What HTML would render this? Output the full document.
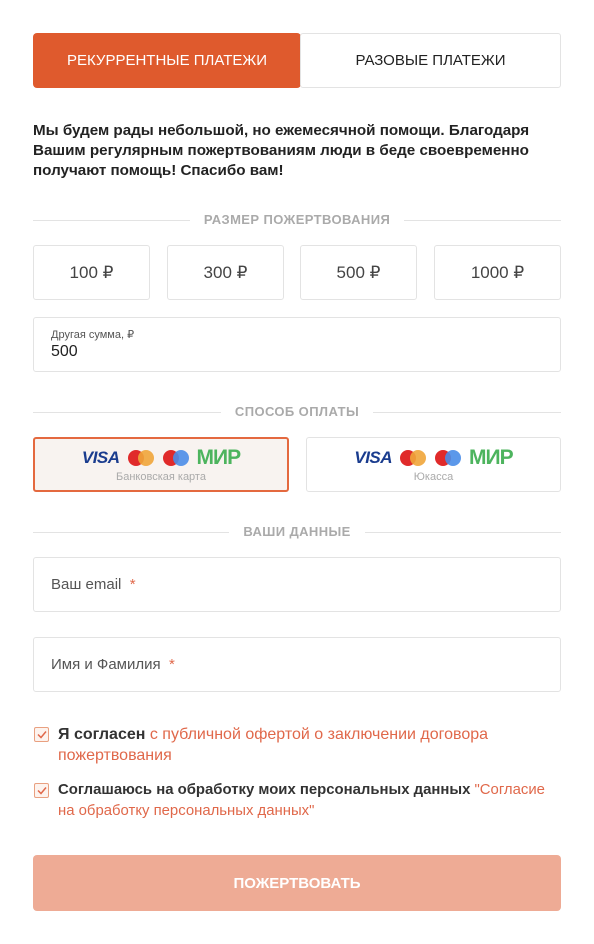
<!DOCTYPE html><html><head><meta charset="utf-8"><style>
*{box-sizing:border-box;margin:0;padding:0}
body{width:594px;height:944px;background:#fff;font-family:"Liberation Sans",sans-serif;color:#333;position:relative}
.a{position:absolute}
.box{position:absolute;border:1px solid #e3e3e3;border-radius:3px;background:#fff}
.div{position:absolute;left:33px;width:528px;height:1px;background:#e3e3e3}
.dl{position:absolute;left:0;width:594px;text-align:center;font-size:13px;font-weight:bold;color:#aaa;letter-spacing:.4px}
.dl span{background:#fff;padding:0 14px}
.amt{top:245px;height:55px;width:117px;font-size:17px;color:#444;display:flex;align-items:center;justify-content:center}
.inp{left:33px;width:528px;height:55px;font-size:15px;color:#555;padding-left:17px;display:flex;align-items:center}
.cb{position:absolute;left:34px;width:15px;height:15px;border:1px solid #e9a080;border-radius:2px;background:#fdf3ee}
.o{color:#e0684a}
.logos{display:flex;align-items:center;justify-content:center;gap:7px;margin-top:8px;height:22px}
.visa{font-style:italic;font-weight:bold;font-size:17px;color:#1a3c8e;letter-spacing:-.5px}
.mir{font-weight:bold;font-size:21px;color:#4db45e;letter-spacing:-1px}
</style></head><body>
<div class="a" style="left:33px;top:33px;width:268px;height:55px;background:#df5a2d;border-radius:4px;color:#fff;font-size:15px;display:flex;align-items:center;justify-content:center">РЕКУРРЕНТНЫЕ ПЛАТЕЖИ</div>
<div class="box" style="left:300px;top:33px;width:261px;height:55px;font-size:15px;color:#222;display:flex;align-items:center;justify-content:center">РАЗОВЫЕ ПЛАТЕЖИ</div>
<div class="a" style="left:33px;top:121px;width:540px;font-size:15.2px;font-weight:bold;line-height:20px;color:#222">Мы будем рады небольшой, но ежемесячной помощи. Благодаря Вашим регулярным пожертвованиям люди в беде своевременно получают помощь! Спасибо вам!</div>
<div class="div" style="top:220px"></div><div class="dl" style="top:212px"><span>РАЗМЕР ПОЖЕРТВОВАНИЯ</span></div>
<div class="box amt" style="left:33px">100 ₽</div>
<div class="box amt" style="left:167px">300 ₽</div>
<div class="box amt" style="left:300px">500 ₽</div>
<div class="box amt" style="left:434px;width:127px">1000 ₽</div>
<div class="box" style="left:33px;top:317px;width:528px;height:55px;padding:10px 0 0 17px"><div style="font-size:11px;color:#555">Другая сумма, ₽</div><div style="font-size:16px;color:#222;margin-top:2px">500</div></div>
<div class="div" style="top:412px"></div><div class="dl" style="top:404px"><span>СПОСОБ ОПЛАТЫ</span></div>
<div class="box" style="left:33px;top:437px;width:256px;height:55px;border:2px solid #e4693f;background:#f8f3f0;text-align:center">
<div class="logos"><span class="visa">VISA</span><svg width="28" height="18"><circle cx="9" cy="9" r="8" fill="#e02a2a"/><circle cx="19" cy="9" r="8" fill="#f0a53a" opacity=".9"/></svg><svg width="28" height="18"><circle cx="9" cy="9" r="8" fill="#e02a2a"/><circle cx="19" cy="9" r="8" fill="#4a8de8" opacity=".9"/></svg><span class="mir">МИР</span></div>
<div style="font-size:11px;color:#aaa;margin-top:2px">Банковская карта</div></div>
<div class="box" style="left:306px;top:437px;width:255px;height:55px;text-align:center">
<div class="logos" style="margin-top:9px"><span class="visa">VISA</span><svg width="28" height="18"><circle cx="9" cy="9" r="8" fill="#e02a2a"/><circle cx="19" cy="9" r="8" fill="#f0a53a" opacity=".9"/></svg><svg width="28" height="18"><circle cx="9" cy="9" r="8" fill="#e02a2a"/><circle cx="19" cy="9" r="8" fill="#4a8de8" opacity=".9"/></svg><span class="mir">МИР</span></div>
<div style="font-size:11px;color:#aaa;margin-top:2px">Юкасса</div></div>
<div class="div" style="top:532px"></div><div class="dl" style="top:524px"><span>ВАШИ ДАННЫЕ</span></div>
<div class="box inp" style="top:557px">Ваш email&nbsp;<span class="o">&nbsp;*</span></div>
<div class="box inp" style="top:637px">Имя и Фамилия&nbsp;<span class="o">&nbsp;*</span></div>
<div class="cb" style="top:727px"><svg width="13" height="13"><path d="M3 6.5l3 3 5-6" stroke="#e0684a" stroke-width="1.5" fill="none"/></svg></div>
<div class="a" style="left:58px;top:724px;width:505px;font-size:16px;line-height:21px"><b style="color:#333">Я согласен</b> <span class="o">с публичной офертой о заключении договора пожертвования</span></div>
<div class="cb" style="top:783px"><svg width="13" height="13"><path d="M3 6.5l3 3 5-6" stroke="#e0684a" stroke-width="1.5" fill="none"/></svg></div>
<div class="a" style="left:58px;top:780px;width:505px;font-size:14.9px;line-height:21px"><b style="color:#333">Соглашаюсь на обработку моих персональных данных</b> <span class="o">"Согласие на обработку персональных данных"</span></div>
<div class="a" style="left:33px;top:855px;width:528px;height:56px;background:#eeab95;border-radius:4px;color:#fff;font-weight:bold;font-size:15px;display:flex;align-items:center;justify-content:center">ПОЖЕРТВОВАТЬ</div>
</body></html>
